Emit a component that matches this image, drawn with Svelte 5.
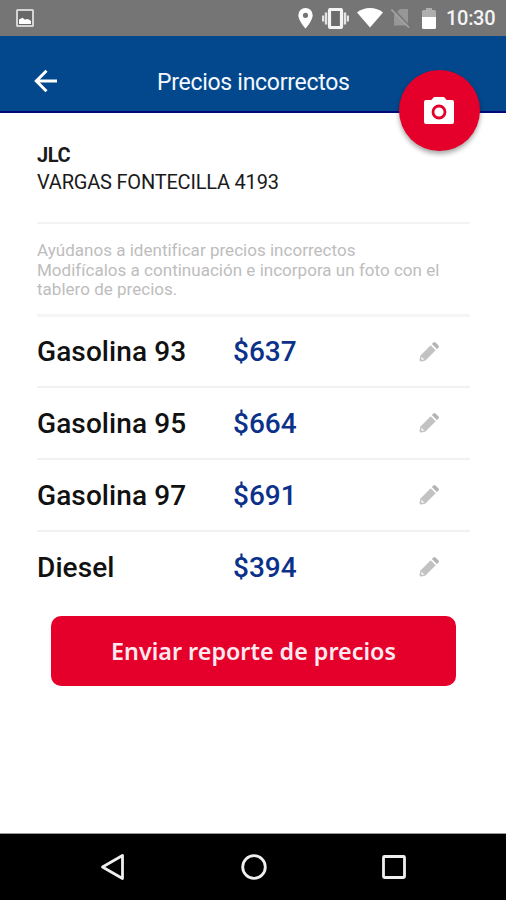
<script>
	let station = { name: 'JLC', address: 'VARGAS FONTECILLA 4193' };

	let prices = [
		{ fuel: 'Gasolina 93', price: 637 },
		{ fuel: 'Gasolina 95', price: 664 },
		{ fuel: 'Gasolina 97', price: 691 },
		{ fuel: 'Diesel', price: 394 }
	];
</script>

<div class="screen">
	<div class="status">
		<svg class="picture" width="18" height="18" viewBox="0 0 18 18">
			<rect x="1" y="1" width="16" height="16" rx="0.5" fill="#686868" stroke="#d4d4d4" stroke-width="2" />
			<path d="M3 15v-4.500l3.500-1.700 2.500 2 2-.8 2 .5 2 1.500v3z" fill="#fff" />
		</svg>
		<svg class="pin" width="15" height="21" viewBox="0 0 15 21">
			<path
				fill="#fff"
				fill-rule="evenodd"
				d="M7.500 0A7.200 7.200 0 0 0 .3 7.200C.3 12.500 7.500 20.500 7.500 20.500s7.200-8 7.200-13.300A7.200 7.200 0 0 0 7.500 0zm0 4.700a2.600 2.600 0 1 1 0 5.200 2.600 2.600 0 0 1 0-5.200z"
			/>
		</svg>
		<svg class="vibrate" width="27" height="21" viewBox="0 0 27 21">
			<path d="M1 7.500v6M4 4.500v12M23 4.500v12M26 7.500v6" stroke="#e4e4e4" stroke-width="2.400" />
			<rect x="7.500" y="1.500" width="12" height="18" rx="1" fill="#6c6c6c" stroke="#f4f4f4" stroke-width="3.200" />
		</svg>
		<svg class="wifi" width="26" height="20" viewBox="0 0 26 20">
			<path d="M0 4.500C3.500 1.600 8 0 13 0s9.500 1.600 13 4.500L13 19.600z" fill="#fff" />
		</svg>
		<svg class="sim" width="19" height="20" viewBox="0 0 19 20">
			<path d="M3 17.500V7l6-6h8v16.500z" fill="#979797" />
			<path d="M2.200 1.200l16 17" stroke="#757575" stroke-width="2" />
			<path d="M.5 1.500l17.500 18" stroke="#a4a4a4" stroke-width="1.600" />
		</svg>
		<svg class="battery" width="14" height="21" viewBox="0 0 14 21">
			<path d="M0 10V3.500q0-1.500 1.500-1.500H4V0h6v2h2.500Q14 2 14 3.500V10z" fill="#aeaeae" />
			<path d="M0 9h14v10.500q0 1.500-1.500 1.500h-11Q0 21 0 19.500z" fill="#fff" />
		</svg>
		<span class="time">10:30</span>
	</div>

	<header>
		<svg class="back" width="24" height="24" viewBox="0 0 24 24">
			<path d="M23 12H2.500M12.500 1.800L2.300 12l10.200 10.200" fill="none" stroke="#fff" stroke-width="3" />
		</svg>
		<h1>Precios incorrectos</h1>
		<button class="fab" aria-label="Tomar foto">
			<svg width="30" height="27" viewBox="0 0 30 27">
				<path
					fill="#fff"
					d="M10 0h10l2.700 3H28q2 0 2 2v20q0 2-2 2H2q-2 0-2-2V5q0-2 2-2h5.300z"
				/>
				<circle cx="15" cy="15" r="6" fill="#fff" stroke="#e4002b" stroke-width="2.800" />
			</svg>
		</button>
	</header>

	<main>
		<section class="station">
			<strong>{station.name}</strong>
			<span>{station.address}</span>
		</section>

		<p class="help">
			Ayúdanos a identificar precios incorrectos<br />
			Modifícalos a continuación e incorpora un foto con el<br />
			tablero de precios.
		</p>

		<ul>
			{#each prices as item}
				<li>
					<span class="fuel">{item.fuel}</span>
					<span class="price">${item.price}</span>
					<svg class="pencil" width="20" height="20" viewBox="0 0 20 20">
						<path d="M11.700 3.300l5 5L6.500 18.500l-4 1Q.3 19.700.5 17.500l1-4z" fill="#c2c2c2" />
						<path d="M12.900 2.100L14.500.5q1-.8 2 0l3 3q.8 1 0 2l-1.600 1.600z" fill="#b4b4b4" />
						<path d="M2.500 14.700l2.800 2.800-2 .5-1.300-1.300z" fill="#f4f4f4" />
					</svg>
				</li>
			{/each}
		</ul>

		<button class="send">Enviar reporte de precios</button>
	</main>

	<nav>
		<svg width="28" height="28" viewBox="0 0 28 28">
			<path d="M3.500 14L23.500 2.500v23z" />
		</svg>
		<svg width="28" height="28" viewBox="0 0 28 28">
			<circle cx="14" cy="14" r="11.300" />
		</svg>
		<svg width="28" height="28" viewBox="0 0 28 28">
			<rect x="3.500" y="3.500" width="21" height="21" rx="1" />
		</svg>
	</nav>
</div>

<style>
	:global(body) {
		margin: 0;
		background: #fff;
	}
	.screen {
		display: flex;
		flex-direction: column;
		width: 506px;
		height: 900px;
		overflow: hidden;
		background: #fff;
		font-family: Roboto, sans-serif;
	}
	svg {
		display: block;
		flex: none;
	}
	button {
		border: 0;
		padding: 0;
		cursor: pointer;
	}

	.status {
		display: flex;
		align-items: center;
		box-sizing: border-box;
		height: 36px;
		padding: 0 11px 0 16px;
		background: #757575;
	}
	.picture {
		margin-right: auto;
	}
	.vibrate {
		margin-left: 9px;
	}
	.wifi {
		margin-left: 8px;
	}
	.sim {
		margin-left: 8px;
	}
	.battery {
		margin-left: 12px;
	}
	.time {
		width: 49px;
		margin-left: 10px;
		color: #f4f4f4;
		font-size: 20px;
		font-weight: 500;
		line-height: 38px;
		letter-spacing: -0.3px;
		white-space: nowrap;
	}

	header {
		position: relative;
		display: flex;
		align-items: center;
		box-sizing: border-box;
		height: 77px;
		padding: 14px 0 0 34px;
		background: #03488c;
		border-bottom: 2px solid #00087c;
	}
	h1 {
		margin: 4px 0 0 99px;
		color: #f4f8ff;
		font-size: 23px;
		font-weight: 400;
		line-height: 30px;
		letter-spacing: -0.28px;
		white-space: nowrap;
	}
	/* floats over the lower edge of the app bar */
	.fab {
		position: absolute;
		top: 34px;
		right: 26px;
		display: flex;
		align-items: center;
		justify-content: center;
		width: 81px;
		height: 81px;
		border-radius: 50%;
		background: #e4002b;
		box-shadow: 0 3px 5px rgba(0, 0, 0, 0.35);
	}
	.fab svg {
		margin-right: 1px;
	}

	main {
		flex: 1;
		padding: 0 36px 0 37px;
	}
	.station {
		display: flex;
		flex-direction: column;
		box-sizing: border-box;
		height: 111px;
		padding-top: 29px;
		border-bottom: 2px solid #f3f3f3;
		color: #1a1a1a;
		font-size: 20px;
		line-height: 27px;
		letter-spacing: -0.2px;
		white-space: nowrap;
	}
	.station strong {
		font-weight: 700;
		letter-spacing: -0.4px;
	}
	.help {
		box-sizing: border-box;
		height: 93px;
		margin: 0;
		padding-top: 17px;
		border-bottom: 3px solid #f5f5f5;
		color: #bdbdbd;
		font-size: 17px;
		line-height: 19.500px;
		letter-spacing: 0.02px;
		white-space: nowrap;
	}
	ul {
		margin: 0;
		padding: 0;
		list-style: none;
	}
	li {
		display: flex;
		align-items: center;
		box-sizing: border-box;
		height: 72px;
		padding-right: 31px;
		border-bottom: 2px solid #f2f2f2;
		font-size: 28px;
		font-weight: 500;
	}
	li:first-child {
		height: 71px;
	}
	li:last-child {
		border-bottom-color: transparent;
	}
	.fuel {
		width: 196px;
		color: #111;
		letter-spacing: 0.1px;
	}
	.price {
		color: #0b318a;
	}
	.pencil {
		margin-left: auto;
	}
	.send {
		display: block;
		width: 405px;
		height: 70px;
		margin: 12px 0 0 14px;
		border-radius: 10px;
		background: #e4002b;
		color: #ffe9ee;
		font-family: 'Noto Sans', sans-serif;
		font-size: 23.300px;
		font-weight: 600;
		white-space: nowrap;
	}

	nav {
		display: flex;
		align-items: center;
		justify-content: space-between;
		box-sizing: border-box;
		height: 67px;
		padding: 0 98px 0 99px;
		border-top: 1px solid #9a9a9a;
		background: #000;
	}
	nav svg {
		fill: none;
		stroke: #efefef;
		stroke-width: 2.800;
		stroke-linejoin: round;
	}
</style>
